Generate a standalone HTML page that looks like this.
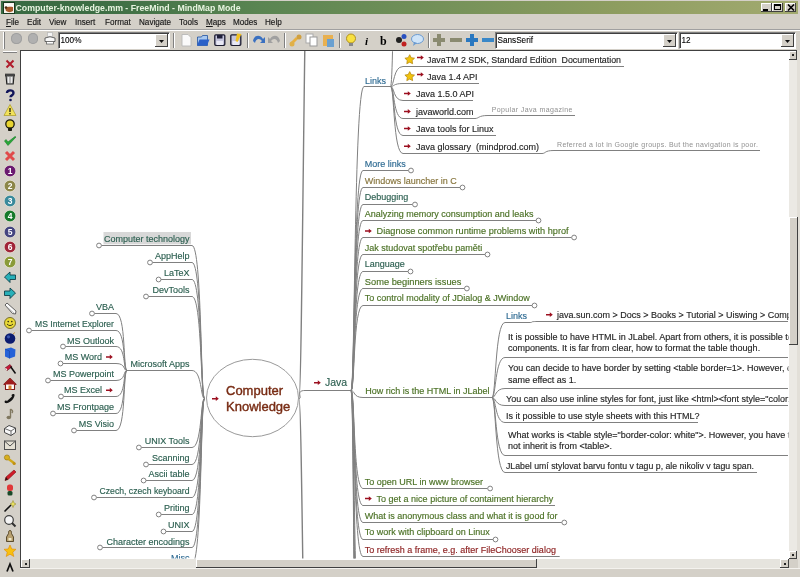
<!DOCTYPE html>
<html><head><meta charset="utf-8"><style>
*{box-sizing:border-box}
body{margin:0;width:800px;height:577px;overflow:hidden;background:#d4d0c8;position:relative;font-family:"Liberation Sans",sans-serif;}
.abs{position:absolute}
</style></head><body><div style="position:absolute;left:0;top:0;width:800px;height:577px;will-change:transform;background:#d4d0c8">

<div class="abs" style="left:1px;top:1px;width:797px;height:13px;background:linear-gradient(to right,#386a42 0%,#3d6e44 12.5%,#5a8552 32.5%,#8e9d60 77.5%,#9aa56a 91%,#a2aa70 100%)"></div>
<div class="abs" style="left:15.5px;top:1.5px;height:13px;line-height:13px;font-size:8.75px;font-weight:bold;color:#e8f4e0;white-space:nowrap">Computer-knowledge.mm - FreeMind - MindMap Mode</div>
<svg class="abs" style="left:2.5px;top:1.5px" width="12" height="12"><rect x="0.5" y="0.5" width="11" height="11" fill="#f8f4ee" stroke="#1a3a20" stroke-width="1"/><path d="M2,5.5 C4,4.5 7,4.5 10,5 L10,9 C8,10.5 5,10.5 3,9z" fill="#a85a2a"/><circle cx="3" cy="5.5" r="1.3" fill="#4a2a10"/><path d="M2,3.5 Q6,1.5 10,4" stroke="#fff" stroke-width="1.4" fill="none"/></svg>
<div class="abs" style="left:760.5px;top:3px;width:11px;height:9px;background:#d4d0c8;border-right:1px solid #404040;border-bottom:1px solid #404040;box-shadow:inset 1px 1px #fff"></div>
<div class="abs" style="left:772px;top:3px;width:11px;height:9px;background:#d4d0c8;border-right:1px solid #404040;border-bottom:1px solid #404040;box-shadow:inset 1px 1px #fff"></div>
<div class="abs" style="left:785px;top:3px;width:11px;height:9px;background:#d4d0c8;border-right:1px solid #404040;border-bottom:1px solid #404040;box-shadow:inset 1px 1px #fff"></div>
<div class="abs" style="left:763px;top:9px;width:5px;height:2px;background:#000"></div>
<div class="abs" style="left:774px;top:4px;width:7px;height:6px;border:1px solid #000;border-top-width:2px"></div>
<svg class="abs" style="left:787px;top:4px" width="8" height="7"><path d="M1,0.5 L7,6.5 M7,0.5 L1,6.5" stroke="#000" stroke-width="1.6"/></svg>
<div class="abs" style="left:6px;top:18px;font-size:8.15px;line-height:10px;color:#181818;white-space:nowrap;-webkit-text-stroke:0.15px #181818"><span style="text-decoration:underline">F</span>ile</div>
<div class="abs" style="left:27px;top:18px;font-size:8.15px;line-height:10px;color:#181818;white-space:nowrap;-webkit-text-stroke:0.15px #181818">Edit</div>
<div class="abs" style="left:49px;top:18px;font-size:8.15px;line-height:10px;color:#181818;white-space:nowrap;-webkit-text-stroke:0.15px #181818">View</div>
<div class="abs" style="left:75px;top:18px;font-size:8.15px;line-height:10px;color:#181818;white-space:nowrap;-webkit-text-stroke:0.15px #181818">Insert</div>
<div class="abs" style="left:105px;top:18px;font-size:8.15px;line-height:10px;color:#181818;white-space:nowrap;-webkit-text-stroke:0.15px #181818">Format</div>
<div class="abs" style="left:139px;top:18px;font-size:8.15px;line-height:10px;color:#181818;white-space:nowrap;-webkit-text-stroke:0.15px #181818">Navigate</div>
<div class="abs" style="left:179px;top:18px;font-size:8.15px;line-height:10px;color:#181818;white-space:nowrap;-webkit-text-stroke:0.15px #181818">Tools</div>
<div class="abs" style="left:206px;top:18px;font-size:8.15px;line-height:10px;color:#181818;white-space:nowrap;-webkit-text-stroke:0.15px #181818"><span style="text-decoration:underline">M</span>aps</div>
<div class="abs" style="left:233px;top:18px;font-size:8.15px;line-height:10px;color:#181818;white-space:nowrap;-webkit-text-stroke:0.15px #181818">Modes</div>
<div class="abs" style="left:265px;top:18px;font-size:8.15px;line-height:10px;color:#181818;white-space:nowrap;-webkit-text-stroke:0.15px #181818">Help</div>
<div class="abs" style="left:0;top:29px;width:800px;height:1px;background:#a0a0a0"></div><div class="abs" style="left:0;top:30px;width:800px;height:1px;background:#fff"></div>
<div class="abs" style="left:3px;top:32px;width:2px;height:17px;border-left:1px solid #fff;border-right:1px solid #808080"></div>
<div class="abs" style="left:11px;top:33.3px;width:10.5px;height:10.5px;border-radius:50%;background:#b0b0b0;box-shadow:inset 0 0 0 1px #a0a0a0"></div>
<div class="abs" style="left:27.5px;top:33.3px;width:10.5px;height:10.5px;border-radius:50%;background:#b0b0b0;box-shadow:inset 0 0 0 1px #a0a0a0"></div>
<svg class="abs" style="left:44px;top:32px" width="12" height="13"><rect x="3.5" y="0.5" width="5" height="4" fill="#f4f4f4" stroke="#bbb" stroke-width="0.8"/><path d="M1,6 Q6,3.5 11,6 V9.5 H1z" fill="#f8f8f8" stroke="#555" stroke-width="0.9"/><rect x="2.5" y="9.5" width="7" height="2.5" fill="#fff" stroke="#666" stroke-width="0.8"/></svg>
<div class="abs" style="left:58px;top:32px;width:112px;height:17px;background:#fff;border-top:1px solid #808080;border-left:1px solid #808080;border-bottom:1px solid #fff;border-right:1px solid #fff;box-shadow:inset 1px 1px #404040"></div>
<div class="abs" style="left:60.5px;top:34px;font-size:8.2px;line-height:13px;color:#000;-webkit-text-stroke:0.1px #000">100%</div>
<div class="abs" style="left:155px;top:34px;width:13px;height:13px;background:#d4d0c8;border-right:1px solid #404040;border-bottom:1px solid #404040;box-shadow:inset 1px 1px #fff"></div>
<svg class="abs" style="left:159px;top:39.5px" width="5" height="3"><path d="M0,0 L5,0 L2.5,3z" fill="#111"/></svg>
<div class="abs" style="left:495px;top:32px;width:183px;height:17px;background:#fff;border-top:1px solid #808080;border-left:1px solid #808080;border-bottom:1px solid #fff;border-right:1px solid #fff;box-shadow:inset 1px 1px #404040"></div>
<div class="abs" style="left:497.5px;top:34px;font-size:8.2px;line-height:13px;color:#000;-webkit-text-stroke:0.1px #000">SansSerif</div>
<div class="abs" style="left:663px;top:34px;width:13px;height:13px;background:#d4d0c8;border-right:1px solid #404040;border-bottom:1px solid #404040;box-shadow:inset 1px 1px #fff"></div>
<svg class="abs" style="left:667px;top:39.5px" width="5" height="3"><path d="M0,0 L5,0 L2.5,3z" fill="#111"/></svg>
<div class="abs" style="left:679px;top:32px;width:117px;height:17px;background:#fff;border-top:1px solid #808080;border-left:1px solid #808080;border-bottom:1px solid #fff;border-right:1px solid #fff;box-shadow:inset 1px 1px #404040"></div>
<div class="abs" style="left:681.5px;top:34px;font-size:8.2px;line-height:13px;color:#000;-webkit-text-stroke:0.1px #000">12</div>
<div class="abs" style="left:781px;top:34px;width:13px;height:13px;background:#d4d0c8;border-right:1px solid #404040;border-bottom:1px solid #404040;box-shadow:inset 1px 1px #fff"></div>
<svg class="abs" style="left:785px;top:39.5px" width="5" height="3"><path d="M0,0 L5,0 L2.5,3z" fill="#111"/></svg>
<div class="abs" style="left:173px;top:33px;width:2px;height:15px;border-left:1px solid #808080;border-right:1px solid #fff"></div>
<div class="abs" style="left:247px;top:33px;width:2px;height:15px;border-left:1px solid #808080;border-right:1px solid #fff"></div>
<div class="abs" style="left:284px;top:33px;width:2px;height:15px;border-left:1px solid #808080;border-right:1px solid #fff"></div>
<div class="abs" style="left:339px;top:33px;width:2px;height:15px;border-left:1px solid #808080;border-right:1px solid #fff"></div>
<div class="abs" style="left:428px;top:33px;width:2px;height:15px;border-left:1px solid #808080;border-right:1px solid #fff"></div>
<svg class="abs" style="left:181px;top:33px" width="14" height="15"><path d="M1,1.5 h6 l3,3 v8.5 h-9z" fill="#fafafa" stroke="#b8b8b8" stroke-width="0.9"/></svg>
<svg class="abs" style="left:197px;top:33px" width="14" height="15"><path d="M0.5,4 h4 l1,-1.5 h5 v10 h-10z" fill="#a8c8f0" stroke="#2050a0" stroke-width="0.8"/><path d="M2.5,6.5 h10 l-2.5,6 h-10z" fill="#2a60c8"/></svg>
<svg class="abs" style="left:214px;top:33px" width="14" height="15"><rect x="0.8" y="1.8" width="10" height="10.5" rx="1" fill="#c4c4dc" stroke="#1c1c30" stroke-width="1.3"/><rect x="3" y="2" width="5.5" height="3.5" fill="#20203a"/><rect x="2.5" y="8" width="6.5" height="4" fill="#e8e8f4"/></svg>
<svg class="abs" style="left:230px;top:33px" width="14" height="15"><rect x="0.8" y="1.8" width="10" height="10.5" rx="1" fill="#c4c4dc" stroke="#1c1c30" stroke-width="1.3"/><rect x="2.5" y="8" width="6.5" height="4" fill="#e8e8f4"/><path d="M7,0.5 l4.5,0.5 l-4,8 l-2,-1z" fill="#f0c020"/></svg>
<svg class="abs" style="left:252px;top:33px" width="14" height="15"><path d="M1,8 C2,2 8,1 11,6 L13,4 L13,10 L8,10 L10,8 C8,5 4,5 3,10z" fill="#3a70c0"/></svg>
<svg class="abs" style="left:267px;top:33px" width="14" height="15"><path d="M13,8 C12,2 6,1 3,6 L1,4 L1,10 L6,10 L4,8 C6,5 10,5 11,10z" fill="#a0a0a0"/></svg>
<svg class="abs" style="left:289px;top:33px" width="14" height="15"><path d="M2,9 l5,-5 l2,2 l-5,5z" fill="#e8b040"/><circle cx="10" cy="4" r="2.5" fill="#d0a040"/><circle cx="3" cy="11" r="2.5" fill="#e0b048"/></svg>
<svg class="abs" style="left:305px;top:33px" width="14" height="15"><rect x="1" y="1" width="7" height="9" fill="#fff" stroke="#aaa"/><rect x="5" y="4" width="7" height="9" fill="#fff" stroke="#999"/></svg>
<svg class="abs" style="left:322px;top:33px" width="14" height="15"><rect x="1" y="2" width="10" height="11" fill="#e8b050"/><rect x="5" y="6" width="7" height="8" fill="#6aa0d0"/></svg>
<svg class="abs" style="left:345px;top:33px" width="14" height="15"><circle cx="6" cy="5.5" r="4.5" fill="#f8e040" stroke="#b09020"/><rect x="4" y="10" width="4" height="3" fill="#888"/></svg>
<svg class="abs" style="left:362px;top:33px" width="14" height="15"><text x="3" y="12" font-size="11" font-style="italic" font-weight="bold" font-family="Liberation Serif">i</text></svg>
<svg class="abs" style="left:379px;top:33px" width="14" height="15"><text x="1" y="12" font-size="12" font-weight="bold" font-family="Liberation Serif">b</text></svg>
<svg class="abs" style="left:395px;top:33px" width="14" height="15"><circle cx="4" cy="7" r="3" fill="#222"/><circle cx="9" cy="3.5" r="2.5" fill="#2850c0"/><circle cx="9" cy="11" r="2.5" fill="#c02020"/></svg>
<svg class="abs" style="left:411px;top:33px" width="14" height="15"><ellipse cx="6.5" cy="6" rx="6" ry="4.5" fill="#cfe4f8" stroke="#6a9ad0"/><path d="M3,9 l-1,4 l4,-3z" fill="#6a9ad0"/></svg>
<svg class="abs" style="left:433px;top:33px" width="14" height="15"><path d="M4,1 h4 v4 h4 v4 h-4 v4 h-4 v-4 h-4 v-4 h4z" fill="#8a8a70"/></svg>
<svg class="abs" style="left:450px;top:33px" width="14" height="15"><rect x="0" y="5" width="12" height="4" fill="#8a8a70"/></svg>
<svg class="abs" style="left:466px;top:33px" width="14" height="15"><path d="M4,1 h4 v4 h4 v4 h-4 v4 h-4 v-4 h-4 v-4 h4z" fill="#2a78c0"/></svg>
<svg class="abs" style="left:482px;top:33px" width="14" height="15"><rect x="0" y="5" width="12" height="4" fill="#3a88c8"/></svg>
<div class="abs" style="left:3px;top:51px;width:14px;height:2px;border-top:1px solid #fff;border-bottom:1px solid #808080"></div>
<svg class="abs" style="left:3px;top:57.2px" width="14" height="14"><path d="M3.5,3.5 L10.5,10.5 M10.5,3.5 L3.5,10.5" stroke="#b01c2c" stroke-width="2"/></svg>
<svg class="abs" style="left:3px;top:72.4px" width="14" height="14"><path d="M3,3.5 h8 l-0.8,8.5 h-6.4z" fill="#b8b8b8" stroke="#202020" stroke-width="1.1"/><rect x="2.5" y="2" width="9" height="2" fill="#555" stroke="#202020" stroke-width="0.6"/><path d="M5.5,5 v6 M8.5,5 v6" stroke="#f0f0f0" stroke-width="0.9"/></svg>
<svg class="abs" style="left:3px;top:87.6px" width="14" height="14"><path d="M4,5 C4,1.5 10.5,1.5 10.5,5 C10.5,7.5 7.5,7.2 7.5,9.2" stroke="#10145a" stroke-width="2.4" fill="none"/><circle cx="7.5" cy="12" r="1.3" fill="#10145a"/></svg>
<svg class="abs" style="left:3px;top:102.9px" width="14" height="14"><path d="M7,1.5 L13,12.5 L1,12.5z" fill="#f2e25a" stroke="#b0a030" stroke-width="0.8" stroke-linejoin="round"/><rect x="6.3" y="5" width="1.4" height="4" fill="#302a10"/><rect x="6.3" y="10" width="1.4" height="1.4" fill="#302a10"/></svg>
<svg class="abs" style="left:3px;top:118.1px" width="14" height="14"><circle cx="7" cy="6" r="4.2" fill="#e8d430" stroke="#1a1a0a" stroke-width="1.3"/><rect x="5" y="9.8" width="4" height="3.2" rx="0.8" fill="#1a1a10"/></svg>
<svg class="abs" style="left:3px;top:133.3px" width="14" height="14"><path d="M1.5,8 L5,12.5 L13,4 L12,3.5 L5,9 L3,6.5z" fill="#28a838" stroke="#1a7a28" stroke-width="0.6"/></svg>
<svg class="abs" style="left:3px;top:148.5px" width="14" height="14"><path d="M3,3 L11,11 M11,3 L3,11" stroke="#e04a4a" stroke-width="3"/></svg>
<svg class="abs" style="left:3px;top:163.7px" width="14" height="14"><circle cx="7" cy="7" r="5.8" fill="#6a1a70" stroke="#f4f0e0" stroke-width="0.6"/><text x="7" y="10.2" font-size="8.5" font-weight="bold" fill="#fff" text-anchor="middle">1</text></svg>
<svg class="abs" style="left:3px;top:179.0px" width="14" height="14"><circle cx="7" cy="7" r="5.8" fill="#8c8648" stroke="#f4f0e0" stroke-width="0.6"/><text x="7" y="10.2" font-size="8.5" font-weight="bold" fill="#fff" text-anchor="middle">2</text></svg>
<svg class="abs" style="left:3px;top:194.2px" width="14" height="14"><circle cx="7" cy="7" r="5.8" fill="#3a8a9c" stroke="#f4f0e0" stroke-width="0.6"/><text x="7" y="10.2" font-size="8.5" font-weight="bold" fill="#fff" text-anchor="middle">3</text></svg>
<svg class="abs" style="left:3px;top:209.4px" width="14" height="14"><circle cx="7" cy="7" r="5.8" fill="#157a2a" stroke="#f4f0e0" stroke-width="0.6"/><text x="7" y="10.2" font-size="8.5" font-weight="bold" fill="#fff" text-anchor="middle">4</text></svg>
<svg class="abs" style="left:3px;top:224.6px" width="14" height="14"><circle cx="7" cy="7" r="5.8" fill="#454580" stroke="#f4f0e0" stroke-width="0.6"/><text x="7" y="10.2" font-size="8.5" font-weight="bold" fill="#fff" text-anchor="middle">5</text></svg>
<svg class="abs" style="left:3px;top:239.8px" width="14" height="14"><circle cx="7" cy="7" r="5.8" fill="#a02438" stroke="#f4f0e0" stroke-width="0.6"/><text x="7" y="10.2" font-size="8.5" font-weight="bold" fill="#fff" text-anchor="middle">6</text></svg>
<svg class="abs" style="left:3px;top:255.1px" width="14" height="14"><circle cx="7" cy="7" r="5.8" fill="#8a9a38" stroke="#f4f0e0" stroke-width="0.6"/><text x="7" y="10.2" font-size="8.5" font-weight="bold" fill="#fff" text-anchor="middle">7</text></svg>
<svg class="abs" style="left:3px;top:270.3px" width="14" height="14"><path d="M1.5,7 L7,2 V5 H12.5 V9.5 H7 V12.5z" fill="#28b0b8" stroke="#104048" stroke-width="0.9" stroke-linejoin="round"/></svg>
<svg class="abs" style="left:3px;top:285.5px" width="14" height="14"><path d="M12.5,7 L7,2 V5 H1.5 V9.5 H7 V12.5z" fill="#28b0b8" stroke="#104048" stroke-width="0.9" stroke-linejoin="round"/></svg>
<svg class="abs" style="left:3px;top:300.7px" width="14" height="14"><path d="M2,4 L4,2 L13,10 L12.5,13 L9.5,12.5z" fill="#fafafa" stroke="#505050" stroke-width="0.9" stroke-linejoin="round"/><path d="M3.5,5.5 L11,12" stroke="#888" stroke-width="0.5"/></svg>
<svg class="abs" style="left:3px;top:315.9px" width="14" height="14"><circle cx="7" cy="7" r="5.5" fill="#e8d838" stroke="#6a6020" stroke-width="0.9"/><circle cx="5.2" cy="5.6" r="0.8" fill="#302a10"/><circle cx="8.8" cy="5.6" r="0.8" fill="#302a10"/><path d="M4,8 Q7,11.2 10,8" stroke="#302a10" fill="none" stroke-width="0.9"/></svg>
<svg class="abs" style="left:3px;top:331.2px" width="14" height="14"><circle cx="7" cy="7.5" r="5.3" fill="#0c1c70"/><circle cx="5.5" cy="5.8" r="1.6" fill="#3a56b0"/><path d="M10,3 l2,-1.5" stroke="#c08020" stroke-width="0.8"/></svg>
<svg class="abs" style="left:3px;top:346.4px" width="14" height="14"><path d="M2,3 L8,1.5 L12.5,3.5 L12,10.5 L6.5,12.5 L2,10.5z" fill="#2662d8"/><path d="M2,3 L6.5,5 L6.5,12.5" stroke="#1a48a8" fill="none" stroke-width="0.7"/></svg>
<svg class="abs" style="left:3px;top:361.6px" width="14" height="14"><path d="M2,6 L7,2.5 L9,5 L4,8.5z" fill="#c81838" stroke="#5a0a18" stroke-width="0.6"/><path d="M2.5,6 L4,8" stroke="#fff" stroke-width="1"/><path d="M7.5,4.5 L12.5,11.5" stroke="#101010" stroke-width="1.5"/></svg>
<svg class="abs" style="left:3px;top:376.8px" width="14" height="14"><path d="M7,1.5 L13,7.5 H11.5 V12.5 H2.5 V7.5 H1z" fill="#fff" stroke="#801818" stroke-width="1.1" stroke-linejoin="round"/><path d="M7,1.5 L13,7.5 H1z" fill="#a01c1c"/><rect x="5.5" y="8.5" width="3" height="4" fill="#d88030"/></svg>
<svg class="abs" style="left:3px;top:392.0px" width="14" height="14"><path d="M2,11 C1,9 2,8 4,9 L9,4.5 C8,3 9,1.5 11,2 C13.5,3 8,12.5 2,11z" fill="#141414"/></svg>
<svg class="abs" style="left:3px;top:407.3px" width="14" height="14"><path d="M7.5,2 V10 M7.5,2 C9,3 10.5,4 9,6" stroke="#807860" stroke-width="1.4" fill="none"/><ellipse cx="5.8" cy="10.5" rx="2.3" ry="1.8" fill="#807860"/></svg>
<svg class="abs" style="left:3px;top:422.5px" width="14" height="14"><path d="M1.5,5.5 L6,2.5 L12.5,5 L12.5,9.5 L8,12.5 L1.5,9.5z" fill="#f8f8f8" stroke="#484848" stroke-width="1"/><path d="M1.5,5.5 L8,8 L12.5,5 M8,8 V12.5" stroke="#484848" fill="none" stroke-width="0.8"/></svg>
<svg class="abs" style="left:3px;top:437.7px" width="14" height="14"><rect x="1.5" y="3" width="11" height="8.5" fill="#e4e0d4" stroke="#505050" stroke-width="1"/><path d="M1.5,3 L7,8 L12.5,3" stroke="#505050" fill="none" stroke-width="1"/></svg>
<svg class="abs" style="left:3px;top:452.9px" width="14" height="14"><circle cx="4" cy="4.5" r="2.6" fill="#d8b020" stroke="#907010" stroke-width="0.6"/><path d="M5.5,6 L11,10" stroke="#d0a818" stroke-width="2.4"/><circle cx="11.2" cy="10.5" r="1.6" fill="#c09010"/></svg>
<svg class="abs" style="left:3px;top:468.1px" width="14" height="14"><path d="M2,12.5 L3,9 L11,2 L13,4 L5,11.5z" fill="#d01c28" stroke="#801018" stroke-width="0.6"/><path d="M2,12.5 L3,9 L5,11.5z" fill="#301010"/></svg>
<svg class="abs" style="left:3px;top:483.4px" width="14" height="14"><rect x="4" y="1.5" width="6" height="6.5" rx="2.5" fill="#e03838"/><rect x="4.5" y="8" width="5" height="4.5" rx="1.5" fill="#1a4a2a"/></svg>
<svg class="abs" style="left:3px;top:498.6px" width="14" height="14"><path d="M1.5,12.5 L8,6" stroke="#101010" stroke-width="1.6"/><path d="M10,1.5 L11,4 L13,5 L11,6 L10,8.5 L9,6 L7,5 L9,4z" fill="#e8e060" stroke="#8a8020" stroke-width="0.5"/></svg>
<svg class="abs" style="left:3px;top:513.8px" width="14" height="14"><circle cx="6" cy="6" r="4.3" fill="#f4f4f4" stroke="#404040" stroke-width="1.2"/><path d="M9,9 L12.5,12.5" stroke="#303030" stroke-width="2"/></svg>
<svg class="abs" style="left:3px;top:529.0px" width="14" height="14"><path d="M7,1.5 C5.5,1.5 5.5,3 5.5,4.5 L3.5,8 V12.5 H10.5 V8 L8.5,4.5 C8.5,3 8.5,1.5 7,1.5z" fill="#b8a070" stroke="#403010" stroke-width="0.8"/><rect x="5.5" y="9" width="3" height="2.5" fill="#f0e8c8"/></svg>
<svg class="abs" style="left:3px;top:544.2px" width="14" height="14"><path d="M7,1 L8.8,5 L13,5.3 L9.8,8.2 L10.8,12.5 L7,10.2 L3.2,12.5 L4.2,8.2 L1,5.3 L5.2,5z" fill="#f8c010" stroke="#e08a00" stroke-width="0.6" stroke-linejoin="round"/></svg>
<svg class="abs" style="left:3px;top:559.5px" width="14" height="14"><path d="M4,11.5 L7,4 L10,11.5" stroke="#101010" stroke-width="1.7" fill="none"/></svg>
<div class="abs" style="left:20px;top:50px;width:777px;height:519px;background:#fff;border-top:1px solid #404040;border-left:1px solid #404040"></div>
<svg style="position:absolute;left:0;top:0;will-change:transform" width="800" height="577"><defs><clipPath id="cv"><rect x="21" y="51" width="767.5" height="507.5"/></clipPath></defs><g clip-path="url(#cv)" style="font-family:"Liberation Sans",sans-serif;"><path d="M299.0,398.5 C303.0,398.5 305.0,-299.5 315.0,-299.5" stroke="#808080" stroke-width="1.4" fill="none"/><path d="M299.0,398.5 C303.0,398.5 305.0,1000.5 315.0,1000.5" stroke="#808080" stroke-width="1.4" fill="none"/><path d="M299.0,398.5 C303.0,398.5 295.0,390.5 305.0,390.5" stroke="#808080" stroke-width="1.0" fill="none"/><path d="M305.0,390.5 L351.0,390.5" stroke="#808080" stroke-width="1.0" fill="none"/><path d="M351.0,390.5 C355.0,390.5 354.0,86.5 364.0,86.5" stroke="#808080" stroke-width="1.0" fill="none"/><path d="M364.0,86.5 L390.5,86.5" stroke="#808080" stroke-width="1.0" fill="none"/><path d="M390.5,86.5 C394.5,86.5 393.0,-199.5 403.0,-199.5" stroke="#808080" stroke-width="1.0" fill="none"/><path d="M390.5,86.5 C394.5,86.5 393.0,66.5 403.0,66.5" stroke="#808080" stroke-width="1.0" fill="none"/><path d="M403.0,66.5 L624.0,66.5" stroke="#808080" stroke-width="1.0" fill="none"/><path d="M390.5,86.5 C394.5,86.5 393.0,83.5 403.0,83.5" stroke="#808080" stroke-width="1.0" fill="none"/><path d="M403.0,83.5 L479.0,83.5" stroke="#808080" stroke-width="1.0" fill="none"/><path d="M390.5,86.5 C394.5,86.5 393.0,100.5 403.0,100.5" stroke="#808080" stroke-width="1.0" fill="none"/><path d="M403.0,100.5 L473.0,100.5" stroke="#808080" stroke-width="1.0" fill="none"/><path d="M390.5,86.5 C394.5,86.5 393.0,118.5 403.0,118.5" stroke="#808080" stroke-width="1.0" fill="none"/><path d="M403.0,118.5 L475.0,118.5" stroke="#808080" stroke-width="1.0" fill="none"/><path d="M475.0,118.5 C479.0,118.5 478.0,115.5 488.0,115.5" stroke="#808080" stroke-width="1.0" fill="none"/><path d="M488.0,115.5 L575.0,115.5" stroke="#808080" stroke-width="1.0" fill="none"/><path d="M390.5,86.5 C394.5,86.5 393.0,135.5 403.0,135.5" stroke="#808080" stroke-width="1.0" fill="none"/><path d="M403.0,135.5 L496.0,135.5" stroke="#808080" stroke-width="1.0" fill="none"/><path d="M390.5,86.5 C394.5,86.5 393.0,153.5 403.0,153.5" stroke="#808080" stroke-width="1.0" fill="none"/><path d="M403.0,153.5 L542.0,153.5" stroke="#808080" stroke-width="1.0" fill="none"/><path d="M542.0,153.5 C546.0,153.5 544.0,150.5 554.0,150.5" stroke="#808080" stroke-width="1.0" fill="none"/><path d="M554.0,150.5 L760.0,150.5" stroke="#808080" stroke-width="1.0" fill="none"/><path d="M351.0,390.5 C355.0,390.5 353.0,170.5 363.0,170.5" stroke="#808080" stroke-width="1.0" fill="none"/><path d="M363.0,170.5 L408.5,170.5" stroke="#808080" stroke-width="1.0" fill="none"/><path d="M351.0,390.5 C355.0,390.5 353.0,187.5 363.0,187.5" stroke="#808080" stroke-width="1.0" fill="none"/><path d="M363.0,187.5 L460.0,187.5" stroke="#808080" stroke-width="1.0" fill="none"/><path d="M351.0,390.5 C355.0,390.5 353.0,204.5 363.0,204.5" stroke="#808080" stroke-width="1.0" fill="none"/><path d="M363.0,204.5 L412.5,204.5" stroke="#808080" stroke-width="1.0" fill="none"/><path d="M351.0,390.5 C355.0,390.5 353.0,220.5 363.0,220.5" stroke="#808080" stroke-width="1.0" fill="none"/><path d="M363.0,220.5 L536.0,220.5" stroke="#808080" stroke-width="1.0" fill="none"/><path d="M351.0,390.5 C355.0,390.5 353.0,237.5 363.0,237.5" stroke="#808080" stroke-width="1.0" fill="none"/><path d="M363.0,237.5 L571.6,237.5" stroke="#808080" stroke-width="1.0" fill="none"/><path d="M351.0,390.5 C355.0,390.5 353.0,254.5 363.0,254.5" stroke="#808080" stroke-width="1.0" fill="none"/><path d="M363.0,254.5 L485.0,254.5" stroke="#808080" stroke-width="1.0" fill="none"/><path d="M351.0,390.5 C355.0,390.5 353.0,271.5 363.0,271.5" stroke="#808080" stroke-width="1.0" fill="none"/><path d="M363.0,271.5 L408.0,271.5" stroke="#808080" stroke-width="1.0" fill="none"/><path d="M351.0,390.5 C355.0,390.5 353.0,288.5 363.0,288.5" stroke="#808080" stroke-width="1.0" fill="none"/><path d="M363.0,288.5 L464.4,288.5" stroke="#808080" stroke-width="1.0" fill="none"/><path d="M351.0,390.5 C355.0,390.5 353.0,305.5 363.0,305.5" stroke="#808080" stroke-width="1.0" fill="none"/><path d="M363.0,305.5 L532.0,305.5" stroke="#808080" stroke-width="1.0" fill="none"/><path d="M351.0,390.5 C355.0,390.5 353.0,397.5 363.0,397.5" stroke="#808080" stroke-width="1.0" fill="none"/><path d="M363.0,397.5 L492.0,397.5" stroke="#808080" stroke-width="1.0" fill="none"/><path d="M492.0,397.5 C496.0,397.5 495.0,322.5 505.0,322.5" stroke="#808080" stroke-width="1.0" fill="none"/><path d="M505.0,322.5 L530.0,322.5" stroke="#808080" stroke-width="1.0" fill="none"/><path d="M530.0,322.5 C534.0,322.5 528.0,321.5 538.0,321.5" stroke="#808080" stroke-width="1.0" fill="none"/><path d="M538.0,321.5 L788.0,321.5" stroke="#808080" stroke-width="1.0" fill="none"/><path d="M492.0,397.5 C496.0,397.5 495.0,357.5 505.0,357.5" stroke="#808080" stroke-width="1.0" fill="none"/><path d="M505.0,357.5 L788.0,357.5" stroke="#808080" stroke-width="1.0" fill="none"/><path d="M492.0,397.5 C496.0,397.5 495.0,388.5 505.0,388.5" stroke="#808080" stroke-width="1.0" fill="none"/><path d="M505.0,388.5 L788.0,388.5" stroke="#808080" stroke-width="1.0" fill="none"/><path d="M492.0,397.5 C496.0,397.5 495.0,405.5 505.0,405.5" stroke="#808080" stroke-width="1.0" fill="none"/><path d="M505.0,405.5 L788.0,405.5" stroke="#808080" stroke-width="1.0" fill="none"/><path d="M492.0,397.5 C496.0,397.5 495.0,422.5 505.0,422.5" stroke="#808080" stroke-width="1.0" fill="none"/><path d="M505.0,422.5 L698.0,422.5" stroke="#808080" stroke-width="1.0" fill="none"/><path d="M492.0,397.5 C496.0,397.5 495.0,455.5 505.0,455.5" stroke="#808080" stroke-width="1.0" fill="none"/><path d="M505.0,455.5 L788.0,455.5" stroke="#808080" stroke-width="1.0" fill="none"/><path d="M492.0,397.5 C496.0,397.5 495.0,472.5 505.0,472.5" stroke="#808080" stroke-width="1.0" fill="none"/><path d="M505.0,472.5 L757.0,472.5" stroke="#808080" stroke-width="1.0" fill="none"/><path d="M351.0,390.5 C355.0,390.5 353.0,488.5 363.0,488.5" stroke="#808080" stroke-width="1.0" fill="none"/><path d="M363.0,488.5 L487.6,488.5" stroke="#808080" stroke-width="1.0" fill="none"/><path d="M351.0,390.5 C355.0,390.5 353.0,505.5 363.0,505.5" stroke="#808080" stroke-width="1.0" fill="none"/><path d="M363.0,505.5 L555.0,505.5" stroke="#808080" stroke-width="1.0" fill="none"/><path d="M351.0,390.5 C355.0,390.5 353.0,522.5 363.0,522.5" stroke="#808080" stroke-width="1.0" fill="none"/><path d="M363.0,522.5 L561.8,522.5" stroke="#808080" stroke-width="1.0" fill="none"/><path d="M351.0,390.5 C355.0,390.5 353.0,539.5 363.0,539.5" stroke="#808080" stroke-width="1.0" fill="none"/><path d="M363.0,539.5 L493.0,539.5" stroke="#808080" stroke-width="1.0" fill="none"/><path d="M351.0,390.5 C355.0,390.5 353.0,556.5 363.0,556.5" stroke="#808080" stroke-width="1.0" fill="none"/><path d="M363.0,556.5 L559.7,556.5" stroke="#808080" stroke-width="1.0" fill="none"/><path d="M351.0,390.5 C355.0,390.5 353.0,660.5 363.0,660.5" stroke="#808080" stroke-width="1.0" fill="none"/><path d="M351.0,390.5 C355.0,390.5 353.0,760.5 363.0,760.5" stroke="#808080" stroke-width="1.0" fill="none"/><path d="M351.0,390.5 C355.0,390.5 353.0,860.5 363.0,860.5" stroke="#808080" stroke-width="1.0" fill="none"/><path d="M351.0,390.5 C355.0,390.5 353.0,960.5 363.0,960.5" stroke="#808080" stroke-width="1.0" fill="none"/><path d="M204.5,398.5 C200.5,398.5 202.0,245.5 192.0,245.5" stroke="#808080" stroke-width="1.0" fill="none"/><path d="M101.4,245.5 L192.0,245.5" stroke="#808080" stroke-width="1.0" fill="none"/><path d="M204.5,398.5 C200.5,398.5 202.0,262.5 192.0,262.5" stroke="#808080" stroke-width="1.0" fill="none"/><path d="M152.4,262.5 L192.0,262.5" stroke="#808080" stroke-width="1.0" fill="none"/><path d="M204.5,398.5 C200.5,398.5 202.0,279.5 192.0,279.5" stroke="#808080" stroke-width="1.0" fill="none"/><path d="M161.0,279.5 L192.0,279.5" stroke="#808080" stroke-width="1.0" fill="none"/><path d="M204.5,398.5 C200.5,398.5 202.0,296.5 192.0,296.5" stroke="#808080" stroke-width="1.0" fill="none"/><path d="M148.4,296.5 L192.0,296.5" stroke="#808080" stroke-width="1.0" fill="none"/><path d="M204.5,398.5 C200.5,398.5 202.0,370.5 192.0,370.5" stroke="#808080" stroke-width="1.0" fill="none"/><path d="M127.0,370.5 L192.0,370.5" stroke="#808080" stroke-width="1.0" fill="none"/><path d="M127.0,370.5 C123.0,370.5 126.0,313.5 116.0,313.5" stroke="#808080" stroke-width="1.0" fill="none"/><path d="M94.4,313.5 L116.0,313.5" stroke="#808080" stroke-width="1.0" fill="none"/><path d="M127.0,370.5 C123.0,370.5 126.0,330.5 116.0,330.5" stroke="#808080" stroke-width="1.0" fill="none"/><path d="M31.4,330.5 L116.0,330.5" stroke="#808080" stroke-width="1.0" fill="none"/><path d="M127.0,370.5 C123.0,370.5 126.0,346.5 116.0,346.5" stroke="#808080" stroke-width="1.0" fill="none"/><path d="M65.4,346.5 L116.0,346.5" stroke="#808080" stroke-width="1.0" fill="none"/><path d="M127.0,370.5 C123.0,370.5 126.0,363.5 116.0,363.5" stroke="#808080" stroke-width="1.0" fill="none"/><path d="M62.9,363.5 L116.0,363.5" stroke="#808080" stroke-width="1.0" fill="none"/><path d="M127.0,370.5 C123.0,370.5 126.0,380.5 116.0,380.5" stroke="#808080" stroke-width="1.0" fill="none"/><path d="M50.4,380.5 L116.0,380.5" stroke="#808080" stroke-width="1.0" fill="none"/><path d="M127.0,370.5 C123.0,370.5 126.0,396.5 116.0,396.5" stroke="#808080" stroke-width="1.0" fill="none"/><path d="M63.4,396.5 L116.0,396.5" stroke="#808080" stroke-width="1.0" fill="none"/><path d="M127.0,370.5 C123.0,370.5 126.0,413.5 116.0,413.5" stroke="#808080" stroke-width="1.0" fill="none"/><path d="M55.4,413.5 L116.0,413.5" stroke="#808080" stroke-width="1.0" fill="none"/><path d="M127.0,370.5 C123.0,370.5 126.0,430.5 116.0,430.5" stroke="#808080" stroke-width="1.0" fill="none"/><path d="M76.4,430.5 L116.0,430.5" stroke="#808080" stroke-width="1.0" fill="none"/><path d="M204.5,398.5 C200.5,398.5 202.0,447.5 192.0,447.5" stroke="#808080" stroke-width="1.0" fill="none"/><path d="M141.3,447.5 L192.0,447.5" stroke="#808080" stroke-width="1.0" fill="none"/><path d="M204.5,398.5 C200.5,398.5 202.0,464.5 192.0,464.5" stroke="#808080" stroke-width="1.0" fill="none"/><path d="M148.4,464.5 L192.0,464.5" stroke="#808080" stroke-width="1.0" fill="none"/><path d="M204.5,398.5 C200.5,398.5 202.0,480.5 192.0,480.5" stroke="#808080" stroke-width="1.0" fill="none"/><path d="M146.0,480.5 L192.0,480.5" stroke="#808080" stroke-width="1.0" fill="none"/><path d="M204.5,398.5 C200.5,398.5 202.0,497.5 192.0,497.5" stroke="#808080" stroke-width="1.0" fill="none"/><path d="M96.4,497.5 L192.0,497.5" stroke="#808080" stroke-width="1.0" fill="none"/><path d="M204.5,398.5 C200.5,398.5 202.0,514.5 192.0,514.5" stroke="#808080" stroke-width="1.0" fill="none"/><path d="M161.1,514.5 L192.0,514.5" stroke="#808080" stroke-width="1.0" fill="none"/><path d="M204.5,398.5 C200.5,398.5 202.0,531.5 192.0,531.5" stroke="#808080" stroke-width="1.0" fill="none"/><path d="M165.9,531.5 L192.0,531.5" stroke="#808080" stroke-width="1.0" fill="none"/><path d="M204.5,398.5 C200.5,398.5 202.0,547.5 192.0,547.5" stroke="#808080" stroke-width="1.0" fill="none"/><path d="M102.4,547.5 L192.0,547.5" stroke="#808080" stroke-width="1.0" fill="none"/><path d="M204.5,398.5 C200.5,398.5 202.0,564.5 192.0,564.5" stroke="#808080" stroke-width="1.0" fill="none"/><ellipse cx="252.5" cy="398" rx="46" ry="38.7" fill="#fff" stroke="#999" stroke-width="1"/><circle cx="411.0" cy="170.5" r="2.4" fill="#fff" stroke="#808080" stroke-width="1"/><circle cx="462.5" cy="187.5" r="2.4" fill="#fff" stroke="#808080" stroke-width="1"/><circle cx="415.0" cy="204.5" r="2.4" fill="#fff" stroke="#808080" stroke-width="1"/><circle cx="538.5" cy="220.5" r="2.4" fill="#fff" stroke="#808080" stroke-width="1"/><circle cx="574.1" cy="237.5" r="2.4" fill="#fff" stroke="#808080" stroke-width="1"/><circle cx="487.5" cy="254.5" r="2.4" fill="#fff" stroke="#808080" stroke-width="1"/><circle cx="410.5" cy="271.5" r="2.4" fill="#fff" stroke="#808080" stroke-width="1"/><circle cx="466.9" cy="288.5" r="2.4" fill="#fff" stroke="#808080" stroke-width="1"/><circle cx="534.5" cy="305.5" r="2.4" fill="#fff" stroke="#808080" stroke-width="1"/><circle cx="490.1" cy="488.5" r="2.4" fill="#fff" stroke="#808080" stroke-width="1"/><circle cx="564.3" cy="522.5" r="2.4" fill="#fff" stroke="#808080" stroke-width="1"/><circle cx="495.5" cy="539.5" r="2.4" fill="#fff" stroke="#808080" stroke-width="1"/><circle cx="99.0" cy="245.5" r="2.4" fill="#fff" stroke="#808080" stroke-width="1"/><circle cx="150.0" cy="262.5" r="2.4" fill="#fff" stroke="#808080" stroke-width="1"/><circle cx="158.6" cy="279.5" r="2.4" fill="#fff" stroke="#808080" stroke-width="1"/><circle cx="146.0" cy="296.5" r="2.4" fill="#fff" stroke="#808080" stroke-width="1"/><circle cx="92.0" cy="313.5" r="2.4" fill="#fff" stroke="#808080" stroke-width="1"/><circle cx="29.0" cy="330.5" r="2.4" fill="#fff" stroke="#808080" stroke-width="1"/><circle cx="63.0" cy="346.5" r="2.4" fill="#fff" stroke="#808080" stroke-width="1"/><circle cx="60.5" cy="363.5" r="2.4" fill="#fff" stroke="#808080" stroke-width="1"/><circle cx="48.0" cy="380.5" r="2.4" fill="#fff" stroke="#808080" stroke-width="1"/><circle cx="61.0" cy="396.5" r="2.4" fill="#fff" stroke="#808080" stroke-width="1"/><circle cx="53.0" cy="413.5" r="2.4" fill="#fff" stroke="#808080" stroke-width="1"/><circle cx="74.0" cy="430.5" r="2.4" fill="#fff" stroke="#808080" stroke-width="1"/><circle cx="138.9" cy="447.5" r="2.4" fill="#fff" stroke="#808080" stroke-width="1"/><circle cx="146.0" cy="464.5" r="2.4" fill="#fff" stroke="#808080" stroke-width="1"/><circle cx="143.6" cy="480.5" r="2.4" fill="#fff" stroke="#808080" stroke-width="1"/><circle cx="94.0" cy="497.5" r="2.4" fill="#fff" stroke="#808080" stroke-width="1"/><circle cx="158.7" cy="514.5" r="2.4" fill="#fff" stroke="#808080" stroke-width="1"/><circle cx="163.5" cy="531.5" r="2.4" fill="#fff" stroke="#808080" stroke-width="1"/><circle cx="100.0" cy="547.5" r="2.4" fill="#fff" stroke="#808080" stroke-width="1"/><path d="M212,397.95 h3.8 v-1.6 l3,2.35 l-3,2.35 v-1.6 h-3.8z" fill="#9c1020"/><path d="M314,381.95 h3.8 v-1.6 l3,2.35 l-3,2.35 v-1.6 h-3.8z" fill="#9c1020"/><polygon points="409.7,54.7 411.2,57.7 414.5,58.2 412.1,60.5 412.6,63.7 409.7,62.2 406.8,63.7 407.3,60.5 404.9,58.2 408.2,57.7" fill="#f2c40c" stroke="#b88a10" stroke-width="0.8" stroke-linejoin="round"/><path d="M417,56.85000000000001 h3.8 v-1.6 l3,2.35 l-3,2.35 v-1.6 h-3.8z" fill="#9c1020"/><polygon points="409.7,71.6 411.2,74.6 414.5,75.1 412.1,77.4 412.6,80.6 409.7,79.1 406.8,80.6 407.3,77.4 404.9,75.1 408.2,74.6" fill="#f2c40c" stroke="#b88a10" stroke-width="0.8" stroke-linejoin="round"/><path d="M417,73.75 h3.8 v-1.6 l3,2.35 l-3,2.35 v-1.6 h-3.8z" fill="#9c1020"/><path d="M404,92.75 h3.8 v-1.6 l3,2.35 l-3,2.35 v-1.6 h-3.8z" fill="#9c1020"/><path d="M404,110.65 h3.8 v-1.6 l3,2.35 l-3,2.35 v-1.6 h-3.8z" fill="#9c1020"/><path d="M404,127.75 h3.8 v-1.6 l3,2.35 l-3,2.35 v-1.6 h-3.8z" fill="#9c1020"/><path d="M404,145.45 h3.8 v-1.6 l3,2.35 l-3,2.35 v-1.6 h-3.8z" fill="#9c1020"/><path d="M365,230.25 h3.8 v-1.6 l3,2.35 l-3,2.35 v-1.6 h-3.8z" fill="#9c1020"/><path d="M546,313.95 h3.8 v-1.6 l3,2.35 l-3,2.35 v-1.6 h-3.8z" fill="#9c1020"/><path d="M365,497.84999999999997 h3.8 v-1.6 l3,2.35 l-3,2.35 v-1.6 h-3.8z" fill="#9c1020"/><path d="M106,356.15 h3.8 v-1.6 l3,2.35 l-3,2.35 v-1.6 h-3.8z" fill="#9c1020"/><path d="M106,389.45 h3.8 v-1.6 l3,2.35 l-3,2.35 v-1.6 h-3.8z" fill="#9c1020"/><text x="226" y="395" fill="#782c14" stroke="#782c14" stroke-width="0.4" font-size="13">Computer</text><text x="226" y="410.6" fill="#782c14" stroke="#782c14" stroke-width="0.4" font-size="13">Knowledge</text><text x="325.0" y="386.0" fill="#2c5f50" stroke="#2c5f50" stroke-width="0.15" font-size="10.5" text-anchor="start" >Java</text><text x="365.0" y="83.8" fill="#2d6a92" stroke="#2d6a92" stroke-width="0.15" font-size="9" text-anchor="start" >Links</text><text x="427.0" y="63.2" fill="#262626" stroke="#262626" stroke-width="0.15" font-size="9" text-anchor="start"  textLength="194" lengthAdjust="spacingAndGlyphs">JavaTM 2 SDK, Standard Edition&#160; Documentation</text><text x="427.0" y="80.1" fill="#262626" stroke="#262626" stroke-width="0.15" font-size="9" text-anchor="start" >Java 1.4 API</text><text x="416.0" y="97.1" fill="#262626" stroke="#262626" stroke-width="0.15" font-size="9" text-anchor="start" >Java 1.5.0 API</text><text x="416.0" y="115.0" fill="#262626" stroke="#262626" stroke-width="0.15" font-size="9" text-anchor="start" >javaworld.com</text><text x="491.7" y="112.3" fill="#909090" font-size="7" letter-spacing="0.38">Popular Java magazine</text><text x="416.0" y="132.1" fill="#262626" stroke="#262626" stroke-width="0.15" font-size="9" text-anchor="start" >Java tools for Linux</text><text x="416.0" y="149.8" fill="#262626" stroke="#262626" stroke-width="0.15" font-size="9" text-anchor="start" >Java glossary&#160; (mindprod.com)</text><text x="557" y="147.2" fill="#909090" font-size="7" letter-spacing="0.32">Referred a lot in Google groups. But the navigation is poor.</text><text x="364.8" y="167.0" fill="#2d6a92" stroke="#2d6a92" stroke-width="0.15" font-size="9" text-anchor="start" >More links</text><text x="364.8" y="183.8" fill="#86743c" stroke="#86743c" stroke-width="0.15" font-size="9" text-anchor="start" >Windows launcher in C</text><text x="364.8" y="200.4" fill="#2c5f50" stroke="#2c5f50" stroke-width="0.15" font-size="9" text-anchor="start" >Debugging</text><text x="364.8" y="217.2" fill="#4a7024" stroke="#4a7024" stroke-width="0.15" font-size="9" text-anchor="start" >Analyzing memory consumption and leaks</text><text x="376.6" y="234.2" fill="#4a7024" stroke="#4a7024" stroke-width="0.15" font-size="9" text-anchor="start"  textLength="192" lengthAdjust="spacingAndGlyphs">Diagnose common runtime problems with hprof</text><text x="364.8" y="250.8" fill="#4a7024" stroke="#4a7024" stroke-width="0.15" font-size="9" text-anchor="start" >Jak studovat spotřebu paměti</text><text x="364.8" y="267.4" fill="#2c5f50" stroke="#2c5f50" stroke-width="0.15" font-size="9" text-anchor="start" >Language</text><text x="364.8" y="284.6" fill="#4a7024" stroke="#4a7024" stroke-width="0.15" font-size="9" text-anchor="start"  textLength="96.6" lengthAdjust="spacingAndGlyphs">Some beginners issues</text><text x="364.8" y="301.4" fill="#4a7024" stroke="#4a7024" stroke-width="0.15" font-size="9" text-anchor="start" >To control modality of JDialog &amp; JWindow</text><text x="365.3" y="393.8" fill="#4a7024" stroke="#4a7024" stroke-width="0.15" font-size="9" text-anchor="start" >How rich is the HTML in JLabel</text><text x="506.0" y="319.0" fill="#2d6a92" stroke="#2d6a92" stroke-width="0.15" font-size="9" text-anchor="start" >Links</text><text x="557.0" y="317.6" fill="#262626" stroke="#262626" stroke-width="0.15" font-size="9" text-anchor="start" >java.sun.com &gt; Docs &gt; Books &gt; Tutorial &gt; Uiswing &gt; Components</text><text x="508.0" y="339.7" fill="#262626" stroke="#262626" stroke-width="0.15" font-size="9" text-anchor="start" >It is possible to have HTML in JLabel. Apart from others, it is possible to use HTML in many other Swing</text><text x="508.0" y="351.2" fill="#262626" stroke="#262626" stroke-width="0.15" font-size="9" text-anchor="start" >components. It is far from clear, how to format the table though.</text><text x="508.0" y="371.2" fill="#262626" stroke="#262626" stroke-width="0.15" font-size="9" text-anchor="start" >You can decide to have border by setting &lt;table border=1&gt;. However, other values have the</text><text x="508.0" y="382.7" fill="#262626" stroke="#262626" stroke-width="0.15" font-size="9" text-anchor="start" >same effect as 1.</text><text x="506.0" y="401.6" fill="#262626" stroke="#262626" stroke-width="0.15" font-size="9" text-anchor="start" >You can also use inline styles for font, just like &lt;html&gt;&lt;font style="color:red"&gt;</text><text x="506.0" y="418.6" fill="#262626" stroke="#262626" stroke-width="0.15" font-size="9" text-anchor="start" >Is it possible to use style sheets with this HTML?</text><text x="508.0" y="437.7" fill="#262626" stroke="#262626" stroke-width="0.15" font-size="9" text-anchor="start" >What works is &lt;table style="border-color: white"&gt;. However, you have to note that what does</text><text x="508.0" y="449.2" fill="#262626" stroke="#262626" stroke-width="0.15" font-size="9" text-anchor="start" >not inherit is from &lt;table&gt;.</text><text x="506.0" y="468.6" fill="#262626" stroke="#262626" stroke-width="0.15" font-size="9" text-anchor="start"  textLength="248" lengthAdjust="spacingAndGlyphs">JLabel umí stylovat barvu fontu v tagu p, ale nikoliv v tagu span.</text><text x="364.8" y="485.0" fill="#4a7024" stroke="#4a7024" stroke-width="0.15" font-size="9" text-anchor="start" >To open URL in www browser</text><text x="376.6" y="501.8" fill="#4a7024" stroke="#4a7024" stroke-width="0.15" font-size="9" text-anchor="start" >To get a nice picture of contaiment hierarchy</text><text x="364.8" y="518.9" fill="#4a7024" stroke="#4a7024" stroke-width="0.15" font-size="9" text-anchor="start" >What is anonymous class and what it is good for</text><text x="364.8" y="535.4" fill="#4a7024" stroke="#4a7024" stroke-width="0.15" font-size="9" text-anchor="start" >To work with clipboard on Linux</text><text x="364.8" y="552.9" fill="#8a1c1c" stroke="#8a1c1c" stroke-width="0.15" font-size="9" text-anchor="start" >To refresh a frame, e.g. after FileChooser dialog</text><rect x="103.5" y="232" width="87.5" height="12.3" fill="#d8d8d8"/><text x="189.5" y="241.9" fill="#2c5f50" stroke="#2c5f50" stroke-width="0.15" font-size="9" text-anchor="end" >Computer technology</text><text x="189.5" y="258.9" fill="#2c5f50" stroke="#2c5f50" stroke-width="0.15" font-size="9" text-anchor="end" >AppHelp</text><text x="189.5" y="276.0" fill="#2c5f50" stroke="#2c5f50" stroke-width="0.15" font-size="9" text-anchor="end" >LaTeX</text><text x="189.5" y="292.9" fill="#2c5f50" stroke="#2c5f50" stroke-width="0.15" font-size="9" text-anchor="end" >DevTools</text><text x="189.5" y="367.2" fill="#2c5f50" stroke="#2c5f50" stroke-width="0.15" font-size="9" text-anchor="end" >Microsoft Apps</text><text x="114.0" y="309.7" fill="#2c5f50" stroke="#2c5f50" stroke-width="0.15" font-size="9" text-anchor="end" >VBA</text><text x="114.0" y="326.7" fill="#2c5f50" stroke="#2c5f50" stroke-width="0.15" font-size="9" text-anchor="end"  textLength="79" lengthAdjust="spacingAndGlyphs">MS Internet Explorer</text><text x="114.0" y="343.5" fill="#2c5f50" stroke="#2c5f50" stroke-width="0.15" font-size="9" text-anchor="end" >MS Outlook</text><text x="102.0" y="359.9" fill="#2c5f50" stroke="#2c5f50" stroke-width="0.15" font-size="9" text-anchor="end" >MS Word</text><text x="114.0" y="377.0" fill="#2c5f50" stroke="#2c5f50" stroke-width="0.15" font-size="9" text-anchor="end" >MS Powerpoint</text><text x="102.0" y="393.2" fill="#2c5f50" stroke="#2c5f50" stroke-width="0.15" font-size="9" text-anchor="end" >MS Excel</text><text x="114.0" y="410.3" fill="#2c5f50" stroke="#2c5f50" stroke-width="0.15" font-size="9" text-anchor="end" >MS Frontpage</text><text x="114.0" y="427.0" fill="#2c5f50" stroke="#2c5f50" stroke-width="0.15" font-size="9" text-anchor="end" >MS Visio</text><text x="189.5" y="443.7" fill="#2c5f50" stroke="#2c5f50" stroke-width="0.15" font-size="9" text-anchor="end" >UNIX Tools</text><text x="189.5" y="460.7" fill="#2c5f50" stroke="#2c5f50" stroke-width="0.15" font-size="9" text-anchor="end" >Scanning</text><text x="189.5" y="477.4" fill="#2c5f50" stroke="#2c5f50" stroke-width="0.15" font-size="9" text-anchor="end" >Ascii table</text><text x="189.5" y="494.2" fill="#2c5f50" stroke="#2c5f50" stroke-width="0.15" font-size="9" text-anchor="end"  textLength="90" lengthAdjust="spacingAndGlyphs">Czech, czech keyboard</text><text x="189.5" y="510.9" fill="#2c5f50" stroke="#2c5f50" stroke-width="0.15" font-size="9" text-anchor="end" >Priting</text><text x="189.5" y="527.7" fill="#2c5f50" stroke="#2c5f50" stroke-width="0.15" font-size="9" text-anchor="end" >UNIX</text><text x="189.5" y="544.5" fill="#2c5f50" stroke="#2c5f50" stroke-width="0.15" font-size="9" text-anchor="end" >Character encodings</text><text x="189.5" y="561.0" fill="#2d6a92" stroke="#2d6a92" stroke-width="0.15" font-size="9" text-anchor="end" >Misc</text></g></svg>
<div class="abs" style="left:788.5px;top:51px;width:8.5px;height:508px;background:#ebe9e4"></div><div class="abs" style="left:797px;top:50px;width:3px;height:519px;background:#e2dfd8"></div>
<div class="abs" style="left:788.5px;top:51px;width:8.5px;height:8.5px;background:#d4d0c8;border-right:1px solid #404040;border-bottom:1px solid #404040;box-shadow:inset 1px 1px #fff"></div>
<div class="abs" style="left:791.5px;top:54px;width:2px;height:2px;background:#222"></div>
<div class="abs" style="left:788.5px;top:550.5px;width:8.5px;height:8.5px;background:#d4d0c8;border-right:1px solid #404040;border-bottom:1px solid #404040;box-shadow:inset 1px 1px #fff"></div>
<div class="abs" style="left:791.5px;top:553.5px;width:2px;height:2px;background:#222"></div>
<div class="abs" style="left:788.5px;top:217px;width:9px;height:128px;background:#d4d0c8;border-right:1px solid #404040;border-bottom:1px solid #404040;box-shadow:inset 1px 1px #fff"></div>
<div class="abs" style="left:21px;top:559px;width:767.5px;height:9px;background:#e6e4de"></div>
<div class="abs" style="left:21px;top:559px;width:8.5px;height:9px;background:#d4d0c8;border-right:1px solid #404040;border-bottom:1px solid #404040;box-shadow:inset 1px 1px #fff"></div>
<div class="abs" style="left:24.5px;top:562.5px;width:2px;height:2px;background:#222"></div>
<div class="abs" style="left:780px;top:559px;width:8.5px;height:9px;background:#d4d0c8;border-right:1px solid #404040;border-bottom:1px solid #404040;box-shadow:inset 1px 1px #fff"></div>
<div class="abs" style="left:783.5px;top:562.5px;width:2px;height:2px;background:#222"></div>
<div class="abs" style="left:196px;top:559px;width:341px;height:9px;background:#d4d0c8;border-right:1px solid #404040;border-bottom:1px solid #404040;box-shadow:inset 1px 1px #fff"></div>
<div class="abs" style="left:788.5px;top:559px;width:9px;height:9px;background:#d4d0c8"></div>
<div class="abs" style="left:20px;top:568px;width:780px;height:1px;background:#f4f2ee"></div>
</div></body></html>
